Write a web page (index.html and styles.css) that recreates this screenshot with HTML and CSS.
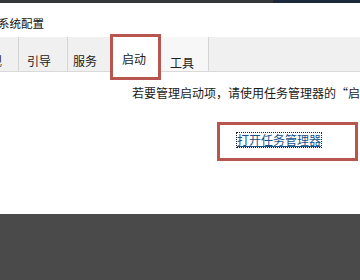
FILE: index.html
```html
<!DOCTYPE html>
<html lang="zh-CN">
<head>
    <meta charset="UTF-8">
    <meta name="viewport" content="width=device-width, initial-scale=1.0">
    <title>系统配置</title>
    <link rel="stylesheet" href="styles.css">
</head>
<body>
    <div class="topbar">
        <div class="topbar-left"></div>
        <div class="topbar-right"></div>
    </div>

    <div class="titlebar">
        <span class="title">系统配置</span>
    </div>

    <div class="tabs">
        <div class="tab tab-general">常规</div>
        <div class="tab tab-boot">引导</div>
        <div class="tab tab-services">服务</div>
        <div class="tab tab-startup active">
            启动
            <div class="mark"></div>
        </div>
        <div class="tab tab-tools">工具</div>
    </div>

    <div class="content">
        <p class="hint">若要管理启动项，请使用任务管理器的“启动”部分。</p>
        <div class="link-row">
            <div class="link-box">
                <a href="#" class="open-link">打开任务管理器</a>
            </div>
        </div>
    </div>

    <div class="footer"></div>
</body>
</html>
```

FILE: styles.css
```css
body {
    margin: 0;
    width: 360px;
    height: 280px;
    overflow: hidden;
    background-color: #fff;
    font-family: "Noto Sans CJK SC", "Noto Sans", sans-serif;
    color: #1a1a1a;
}
.topbar {
    display: flex;
    height: 3px;
}
.topbar-left {
    width: 273px;
    background-color: #343638;
}
.topbar-right {
    flex: 1;
    background-color: #1b2a3a;
}
.titlebar {
    height: 34px;
    display: flex;
    align-items: center;
    background-color: #fff;
    overflow: hidden;
}
.title {
    margin-left: -2px;
    font-size: 11.5px;
    line-height: 16px;
    padding-top: 5px;
    color: #111;
    white-space: nowrap;
}
.tabs {
    display: flex;
    height: 34px;
    background-color: #f0f0f0;
    border-bottom: 1px solid #d9d9d9;
}
.tab {
    position: relative;
    box-sizing: border-box;
    height: 34px;
    padding-top: 16px;
    font-size: 12px;
    line-height: 16px;
    color: #222;
    border-right: 1px solid #d4d4d4;
    white-space: nowrap;
}
.tab-general {
    width: 44px;
    margin-left: -25px;
    padding-left: 3px;
}
.tab-boot {
    width: 49px;
    padding-left: 8px;
}
.tab-services {
    width: 43px;
    padding-left: 5px;
}
.tab-startup {
    width: 50px;
    padding-left: 11px;
    padding-top: 14px;
    height: 35px;
    background-color: #fff;
    border-right: 1px solid #cfcfcf;
}
.tab-tools {
    width: 48px;
    padding-left: 9px;
    padding-top: 18px;
    background-color: #f7f7f7;
}
.mark {
    position: absolute;
    left: -1px;
    top: -3px;
    width: 51px;
    height: 46px;
    box-sizing: border-box;
    border: 3px solid #b8554e;
}
.content {
    height: 142px;
    padding-left: 132px;
    overflow: hidden;
}
.hint {
    margin: 13px 0 0;
    font-size: 12px;
    line-height: 16px;
    white-space: nowrap;
}
.link-row {
    display: flex;
    margin-top: 21px;
    margin-left: 85px;
}
.link-box {
    box-sizing: border-box;
    width: 141px;
    height: 39px;
    border: 3px solid #b8554e;
    padding: 1px 0 0 17px;
}
.open-link {
    display: inline-block;
    font-size: 12px;
    line-height: 14px;
    color: #17528a;
    text-decoration: underline;
    outline: 1px dotted #222;
}
.footer {
    height: 66px;
    background-color: #4a4a4a;
}
```
